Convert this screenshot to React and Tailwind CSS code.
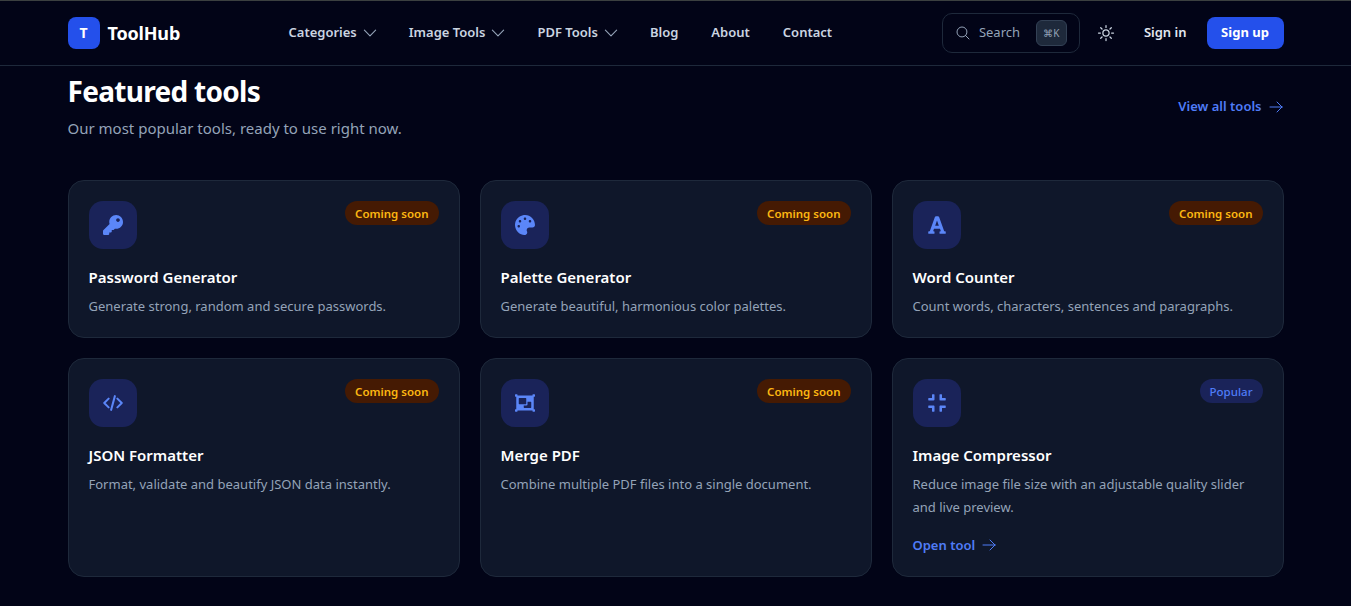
import { HiOutlineArrowRight, HiOutlineChevronDown, HiOutlineCodeBracket, HiOutlineMagnifyingGlass, HiOutlineSun } from 'react-icons/hi2';
import { FaCompress, FaFont, FaKey, FaObjectGroup, FaPalette } from 'react-icons/fa';

const navItems = [
  { label: 'Categories', menu: true },
  { label: 'Image Tools', menu: true },
  { label: 'PDF Tools', menu: true },
  { label: 'Blog' },
  { label: 'About' },
  { label: 'Contact' },
];

const tools = [
  { name: 'Password Generator', text: 'Generate strong, random and secure passwords.', icon: FaKey, badge: 'soon' },
  { name: 'Palette Generator', text: 'Generate beautiful, harmonious color palettes.', icon: FaPalette, badge: 'soon' },
  { name: 'Word Counter', text: 'Count words, characters, sentences and paragraphs.', icon: FaFont, badge: 'soon' },
  { name: 'JSON Formatter', text: 'Format, validate and beautify JSON data instantly.', icon: HiOutlineCodeBracket, iconProps: { size: 20, strokeWidth: 2.4 }, badge: 'soon' },
  { name: 'Merge PDF', text: 'Combine multiple PDF files into a single document.', icon: FaObjectGroup, badge: 'soon' },
  { name: 'Image Compressor', text: 'Reduce image file size with an adjustable quality slider and live preview.', icon: FaCompress, badge: 'popular', open: true },
];

function ToolCard({ tool }) {
  const Icon = tool.icon;
  return (
    <div className="flex flex-col rounded-2xl border border-[#1e293b] bg-[#0f172a] px-5 pt-5 pb-[19px]">
      <div className="flex items-start justify-between">
        <div className="flex h-12 w-12 items-center justify-center rounded-[14px] bg-[#1a2359] text-[#5b86f8]">
          <Icon size={20} {...tool.iconProps} />
        </div>
        {tool.badge === 'soon' ? (
          <span className="rounded-full bg-[#451a03] px-2.5 pt-[5px] pb-[3px] text-[11.5px] leading-4 font-semibold text-[#fcb712]">Coming soon</span>
        ) : (
          <span className="rounded-full bg-[#1a2359] px-2.5 pt-[5px] pb-[3px] text-[11.5px] leading-4 font-medium text-[#4f7cf7]">Popular</span>
        )}
      </div>
      <h3 className="mt-4 text-[15px] leading-6 font-semibold text-white">{tool.name}</h3>
      <p className="mt-1.5 text-[13px] leading-[23px] text-[#94a3b8]">{tool.text}</p>
      {tool.open && (
        <a className="mt-4 mb-0.5 flex items-center gap-1.5 text-[13px] leading-5 font-semibold text-[#4f7cf7]">
          Open tool <HiOutlineArrowRight size={16} />
        </a>
      )}
    </div>
  );
}

export default function App() {
  return (
    <div className="h-[606px] overflow-hidden border-t border-[#3b4040] bg-[#020417] font-['Noto_Sans',sans-serif]">
      <header className="border-b border-[#1e293b]">
        <div className="mx-auto flex h-16 max-w-7xl items-center px-8">
          <div className="flex w-[221px] items-center gap-2">
            <div className="flex h-8 w-8 items-center justify-center rounded-lg bg-[#2450eb] text-sm font-bold text-white">T</div>
            <span className="text-lg font-bold tracking-[-0.01em] text-white">ToolHub</span>
          </div>
          <nav className="flex flex-1 items-center gap-[33px]">
            {navItems.map((item) => (
              <a key={item.label} className="flex items-center gap-1 text-[13px] font-semibold text-[#cbd5e1]">
                {item.label}
                {item.menu && <HiOutlineChevronDown size={18} className="-mr-[3px] text-[#94a3b8]" />}
              </a>
            ))}
          </nav>
          <div className="flex items-center">
            <div className="flex h-10 w-[138px] items-center rounded-[10px] border border-[#1e293b] pr-3 pl-3">
              <HiOutlineMagnifyingGlass size={16} className="text-[#94a3b8]" />
              <span className="ml-2 flex-1 text-[13px] text-[#94a3b8]">Search</span>
              <kbd className="flex h-[26px] w-[31px] items-center justify-center rounded-md border border-[#334155] bg-[#1e293b] font-['Noto_Sans',sans-serif] text-[10px] text-[#94a3b8]">⌘K</kbd>
            </div>
            <HiOutlineSun size={20} className="ml-4 text-[#cbd5e1]" />
            <a className="ml-7 text-[13px] font-semibold text-[#e2e8f0]">Sign in</a>
            <button className="ml-5 h-8 w-[77px] rounded-lg bg-[#2450eb] text-[13px] font-bold text-white">Sign up</button>
          </div>
        </div>
      </header>
      <main className="mx-auto max-w-7xl px-8">
        <div className="flex items-center justify-between">
          <div>
            <h2 className="mt-[5px] text-[28px] leading-10 font-bold tracking-tight text-white">Featured tools</h2>
            <p className="mt-[5px] text-[15px] leading-6 text-[#94a3b8]">Our most popular tools, ready to use right now.</p>
          </div>
          <a className="mt-2 flex items-center gap-1.5 text-[13px] font-semibold text-[#4f7cf7]">
            View all tools <HiOutlineArrowRight size={16} />
          </a>
        </div>
        <div className="mt-10 grid grid-cols-3 gap-5">
          {tools.map((tool) => (
            <ToolCard key={tool.name} tool={tool} />
          ))}
        </div>
      </main>
    </div>
  );
}
